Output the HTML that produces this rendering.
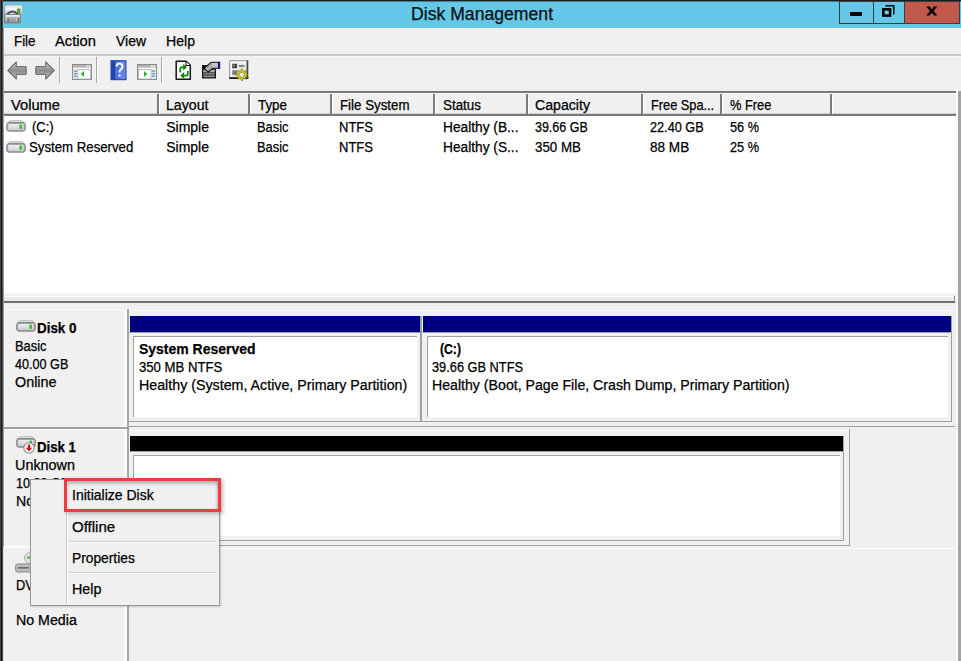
<!DOCTYPE html>
<html><head><meta charset="utf-8">
<style>
*{margin:0;padding:0;box-sizing:border-box}
html,body{width:961px;height:661px;overflow:hidden;background:#f0f0f0}
body{position:relative;font-family:"Liberation Sans",sans-serif;color:#000;font-size:14px}
.a{position:absolute}
.t{position:absolute;white-space:nowrap;line-height:1;transform-origin:0 0;-webkit-text-stroke:0.25px #000}
svg{position:absolute;overflow:visible}
</style></head><body>
<div class="a" style="left:0px;top:0px;width:961px;height:28px;background:#66c8e8"></div>
<div class="a" style="left:0px;top:0px;width:961px;height:1px;background:#1c1c1c"></div>
<div class="a" style="left:0px;top:1px;width:961px;height:1px;background:#3d7f93"></div>
<div class="a" style="left:0px;top:0px;width:1px;height:661px;background:#444;z-index:20"></div>
<div class="a" style="left:1px;top:0px;width:1px;height:661px;background:#131313;z-index:20"></div>
<div class="a" style="left:2px;top:0px;width:1px;height:661px;background:#4c4c4c;z-index:20"></div>
<div class="a" style="left:3px;top:28px;width:1px;height:518px;background:#9a9a9a;z-index:20"></div>
<div class="a" style="left:3px;top:546px;width:1px;height:115px;background:#d8d8d8;z-index:20"></div>
<div class="a" style="left:839px;top:1px;width:35px;height:23px;border:1px solid #3c3c3c;background:#66c8e8"></div>
<div class="a" style="left:873px;top:1px;width:32px;height:23px;border:1px solid #3c3c3c;background:#66c8e8"></div>
<div class="a" style="left:904px;top:1px;width:56px;height:23px;border:1px solid #3c3c3c;background:#c2584b"></div>
<div class="a" style="left:850px;top:12px;width:12px;height:4px;background:#000"></div>
<div class="a" style="left:3px;top:54px;width:958px;height:2px;background:#c9c9cc"></div>
<div class="a" style="left:3px;top:56px;width:958px;height:1px;background:#f6f6f8"></div>
<div class="a" style="left:59px;top:57px;width:1px;height:26px;background:#a8a8a8"></div>
<div class="a" style="left:60px;top:57px;width:1px;height:26px;background:#fcfcfc"></div>
<div class="a" style="left:96px;top:57px;width:1px;height:26px;background:#a8a8a8"></div>
<div class="a" style="left:97px;top:57px;width:1px;height:26px;background:#fcfcfc"></div>
<div class="a" style="left:161px;top:57px;width:1px;height:26px;background:#a8a8a8"></div>
<div class="a" style="left:162px;top:57px;width:1px;height:26px;background:#fcfcfc"></div>
<div class="a" style="left:3px;top:91px;width:953px;height:2px;background:#787878"></div>
<div class="a" style="left:3px;top:93px;width:953px;height:21px;background:#f0f0f0"></div>
<div class="a" style="left:3px;top:93px;width:953px;height:1px;background:#fcfcfc"></div>
<div class="a" style="left:3px;top:113px;width:953px;height:1px;background:#d2d2d2"></div>
<div class="a" style="left:3px;top:114px;width:953px;height:2px;background:#787878"></div>
<div class="a" style="left:3px;top:116px;width:953px;height:177px;background:#fff"></div>
<div class="a" style="left:956px;top:91px;width:2px;height:570px;background:#fafafa"></div>
<div class="a" style="left:958px;top:91px;width:3px;height:570px;background:#a3a3a3"></div>
<div class="a" style="left:157px;top:94px;width:2px;height:20px;background:#7c7c7c"></div>
<div class="a" style="left:159px;top:94px;width:1px;height:20px;background:#fff"></div>
<div class="a" style="left:248px;top:94px;width:2px;height:20px;background:#7c7c7c"></div>
<div class="a" style="left:250px;top:94px;width:1px;height:20px;background:#fff"></div>
<div class="a" style="left:330px;top:94px;width:2px;height:20px;background:#7c7c7c"></div>
<div class="a" style="left:332px;top:94px;width:1px;height:20px;background:#fff"></div>
<div class="a" style="left:433px;top:94px;width:2px;height:20px;background:#7c7c7c"></div>
<div class="a" style="left:435px;top:94px;width:1px;height:20px;background:#fff"></div>
<div class="a" style="left:526px;top:94px;width:2px;height:20px;background:#7c7c7c"></div>
<div class="a" style="left:528px;top:94px;width:1px;height:20px;background:#fff"></div>
<div class="a" style="left:641px;top:94px;width:2px;height:20px;background:#7c7c7c"></div>
<div class="a" style="left:643px;top:94px;width:1px;height:20px;background:#fff"></div>
<div class="a" style="left:720px;top:94px;width:2px;height:20px;background:#7c7c7c"></div>
<div class="a" style="left:722px;top:94px;width:1px;height:20px;background:#fff"></div>
<div class="a" style="left:830px;top:94px;width:2px;height:20px;background:#7c7c7c"></div>
<div class="a" style="left:832px;top:94px;width:1px;height:20px;background:#fff"></div>
<div class="a" style="left:3px;top:293px;width:952px;height:1px;background:#fafafa"></div>
<div class="a" style="left:3px;top:296px;width:951px;height:1px;background:#fcfcfc"></div>
<div class="a" style="left:3px;top:297px;width:951px;height:4px;background:#eaeaea"></div>
<div class="a" style="left:3px;top:301px;width:952px;height:2px;background:#6e6e6e"></div>
<div class="a" style="left:954px;top:296px;width:1px;height:6px;background:#8a8a8a"></div>
<div class="a" style="left:3px;top:309px;width:121px;height:352px;background:#f0f0f0"></div>
<div class="a" style="left:124px;top:309px;width:3px;height:352px;background:#fbfbfb"></div>
<div class="a" style="left:127px;top:309px;width:2px;height:352px;background:#a9a9a9"></div>
<div class="a" style="left:3px;top:427px;width:125px;height:2px;background:#a0a0a0"></div>
<div class="a" style="left:3px;top:309px;width:124px;height:1px;background:#fbfbfb"></div>
<div class="a" style="left:3px;top:429px;width:121px;height:1px;background:#fbfbfb"></div>
<div class="a" style="left:129px;top:310px;width:826px;height:1px;background:#f8f8f8"></div>
<div class="a" style="left:129px;top:430px;width:720px;height:1px;background:#f8f8f8"></div>
<div class="a" style="left:3px;top:546px;width:121px;height:2px;background:#fcfcfc"></div>
<div class="a" style="left:130px;top:316px;width:290px;height:16px;background:#000080"></div>
<div class="a" style="left:423px;top:316px;width:528px;height:16px;background:#000080"></div>
<div class="a" style="left:128px;top:332px;width:824px;height:1px;background:#a0a0a0"></div>
<div class="a" style="left:420px;top:316px;width:2px;height:106px;background:#a0a0a0"></div>
<div class="a" style="left:951px;top:316px;width:1px;height:106px;background:#a0a0a0"></div>
<div class="a" style="left:128px;top:421px;width:824px;height:1px;background:#a0a0a0"></div>
<div class="a" style="left:128px;top:426px;width:827px;height:1px;background:#a0a0a0"></div>
<div class="a" style="left:133px;top:336px;width:284px;height:81px;background:#fff;border-top:1px solid #a0a0a0;border-left:1px solid #a0a0a0"></div>
<div class="a" style="left:427px;top:336px;width:521px;height:81px;background:#fff;border-top:1px solid #a0a0a0;border-left:1px solid #a0a0a0"></div>
<div class="a" style="left:130px;top:436px;width:713px;height:15px;background:#000"></div>
<div class="a" style="left:843px;top:436px;width:1px;height:104px;background:#a0a0a0"></div>
<div class="a" style="left:130px;top:451px;width:714px;height:1px;background:#a0a0a0"></div>
<div class="a" style="left:133px;top:455px;width:707px;height:81px;background:#fff;border-top:1px solid #a0a0a0;border-left:1px solid #a0a0a0"></div>
<div class="a" style="left:128px;top:540px;width:716px;height:1px;background:#a0a0a0"></div>
<div class="a" style="left:849px;top:429px;width:1px;height:117px;background:#a0a0a0"></div>
<div class="a" style="left:128px;top:545px;width:722px;height:1px;background:#a0a0a0"></div>
<div class="a" style="left:128px;top:548px;width:827px;height:1px;background:#fbfbfb"></div>
<div class="a" style="left:30px;top:479px;width:190px;height:127px;background:#f0f0f0;border:1px solid #979797;box-shadow:1px 1px 2px rgba(0,0,0,.18);z-index:5"></div>
<div class="a" style="left:66px;top:482px;width:1px;height:121px;background:#cdcdcd;z-index:6"></div>
<div class="a" style="left:67px;top:482px;width:1px;height:121px;background:#fff;z-index:6"></div>
<div class="a" style="left:68px;top:541px;width:148px;height:1px;background:#cfcfcf;z-index:6"></div>
<div class="a" style="left:68px;top:542px;width:148px;height:1px;background:#fff;z-index:6"></div>
<div class="a" style="left:68px;top:572px;width:148px;height:1px;background:#cfcfcf;z-index:6"></div>
<div class="a" style="left:68px;top:573px;width:148px;height:1px;background:#fff;z-index:6"></div>
<div class="a" style="left:64px;top:478px;width:157px;height:34px;border:3px solid #f53a3f;box-shadow:2px 2px 4px rgba(0,0,0,.25), inset 0 3px 4px -1px rgba(0,0,0,.32), inset -2px 0 3px -1px rgba(0,0,0,.15);z-index:7"></div>
<svg style="left:4px;top:4px;" width="20" height="20" viewBox="0 0 20 20">
<defs><linearGradient id="ag" x1="0" y1="0" x2="0" y2="1"><stop offset="0" stop-color="#f0eef2"/><stop offset="0.5" stop-color="#e6e4ea"/><stop offset="1" stop-color="#c4c6cc"/></linearGradient>
<linearGradient id="ag2" x1="0" y1="0" x2="0" y2="1"><stop offset="0" stop-color="#c8ccd0"/><stop offset="1" stop-color="#7f868b"/></linearGradient></defs>
<rect x="0.6" y="1" width="18" height="9.8" rx="2.6" fill="url(#ag)" stroke="#a4a4aa" stroke-width="0.9"/>
<rect x="2" y="4" width="12" height="1.3" fill="#fafafa"/>
<path d="M3.2 10.2 Q8.5 4.8 13.6 10.2" fill="none" stroke="#4e5054" stroke-width="2"/>
<rect x="13.4" y="5" width="2.6" height="4.2" fill="#2fd22f" stroke="#3a6a3a" stroke-width="0.6"/>
<rect x="0.5" y="10.6" width="16" height="8.4" fill="url(#ag2)" stroke="#7a8186" stroke-width="0.9"/>
<rect x="1.2" y="11.2" width="14.6" height="1.4" fill="#eef3f6"/>
<path d="M3 13.8v3.4M13 13.8v3.4" stroke="#f2f2f2" stroke-width="1"/>
<path d="M4 14v3.4M14 14v3.4" stroke="#40454a" stroke-width="0.9"/>
</svg>
<svg style="left:882px;top:5px;" width="13" height="13" viewBox="0 0 13 13">
<path d="M3.5 0.75 H11.75 V9.5" fill="none" stroke="#000" stroke-width="1.5"/>
<rect x="1.3" y="4.3" width="6.8" height="6.3" fill="none" stroke="#000" stroke-width="2.5"/>
</svg>
<svg style="left:926px;top:6px;" width="12" height="10" viewBox="0 0 12 10">
<path d="M0.3 0.4 H3.7 L5.8 3.5 L7.9 0.4 H11.3 L7.6 4.95 L11.3 9.5 H7.9 L5.8 6.4 L3.7 9.5 H0.3 L4 4.95 Z" fill="#000"/>
</svg>
<svg style="left:7px;top:61px;" width="20" height="19" viewBox="0 0 20 19"><defs><linearGradient id="ar1" x1="0" y1="0" x2="0" y2="1"><stop offset="0" stop-color="#d2d2d2"/><stop offset="0.5" stop-color="#8c8c8c"/><stop offset="1" stop-color="#c4c4c4"/></linearGradient></defs>
<path d="M0.8 9.5 L9.3 1 L9.3 5.6 L18.5 5.6 Q19.2 5.6 19.2 6.4 L19.2 12.6 Q19.2 13.4 18.5 13.4 L9.3 13.4 L9.3 18 Z" fill="url(#ar1)" stroke="#747474" stroke-width="1.2" stroke-linejoin="round"/></svg>
<svg style="left:35px;top:61px;" width="20" height="19" viewBox="0 0 20 19"><defs><linearGradient id="ar2" x1="0" y1="0" x2="0" y2="1"><stop offset="0" stop-color="#d2d2d2"/><stop offset="0.5" stop-color="#8c8c8c"/><stop offset="1" stop-color="#c4c4c4"/></linearGradient></defs>
<path d="M19.2 9.5 L10.7 1 L10.7 5.6 L1.5 5.6 Q0.8 5.6 0.8 6.4 L0.8 12.6 Q0.8 13.4 1.5 13.4 L10.7 13.4 L10.7 18 Z" fill="url(#ar2)" stroke="#747474" stroke-width="1.2" stroke-linejoin="round"/></svg>
<svg style="left:72px;top:64px;" width="20" height="16" viewBox="0 0 20 16">
<rect x="0.5" y="0.5" width="19" height="15" fill="#e4e4e4" stroke="#8c8c8c"/>
<rect x="1" y="1" width="18" height="2.5" fill="#b4b4b4"/>
<rect x="14" y="1.5" width="1.5" height="1.5" fill="#fff"/><rect x="16.5" y="1.5" width="1.5" height="1.5" fill="#fff"/>
<rect x="1" y="4" width="18" height="1" fill="#fff"/>
<rect x="6" y="5.5" width="12.5" height="9.5" fill="#fff" stroke="#9a9a9a" stroke-width="0.6"/>
<rect x="2" y="6.5" width="3" height="1.3" fill="#5b9bd5"/><rect x="2" y="9" width="3" height="1.3" fill="#5b9bd5"/><rect x="2" y="11.5" width="3" height="1.3" fill="#5b9bd5"/>
<path d="M8.5 10 L12 7 L12 13 Z" fill="#2fb52f"/>
</svg>
<svg style="left:137px;top:64px;" width="20" height="16" viewBox="0 0 20 16">
<rect x="0.5" y="0.5" width="19" height="15" fill="#e4e4e4" stroke="#8c8c8c"/>
<rect x="1" y="1" width="18" height="2.5" fill="#b4b4b4"/>
<rect x="14" y="1.5" width="1.5" height="1.5" fill="#fff"/><rect x="16.5" y="1.5" width="1.5" height="1.5" fill="#fff"/>
<rect x="1" y="4" width="18" height="1" fill="#fff"/>
<rect x="1.5" y="5.5" width="12.5" height="9.5" fill="#fff" stroke="#9a9a9a" stroke-width="0.6"/>
<rect x="15" y="6.5" width="3" height="1.3" fill="#5b9bd5"/><rect x="15" y="9" width="3" height="1.3" fill="#5b9bd5"/><rect x="15" y="11.5" width="3" height="1.3" fill="#5b9bd5"/>
<path d="M10.5 10 L7 7 L7 13 Z" fill="#2fb52f"/>
</svg>
<svg style="left:110px;top:60px;" width="17" height="20" viewBox="0 0 17 20">
<defs><linearGradient id="hg" x1="0" y1="0" x2="1" y2="0"><stop offset="0" stop-color="#2a52c8"/><stop offset="0.25" stop-color="#1f3f9e"/><stop offset="0.3" stop-color="#4a6fd8"/><stop offset="1" stop-color="#6b8ceb"/></linearGradient></defs>
<rect x="1" y="0.7" width="15" height="19" fill="url(#hg)" stroke="#1d3ca8" stroke-width="1"/>
<path d="M6.6 6.6 Q6.6 3.6 9.4 3.6 Q12.4 3.6 12.4 6.4 Q12.4 8.4 10.6 9.6 Q9.5 10.4 9.5 12.6" fill="none" stroke="#f4f6ff" stroke-width="2"/>
<rect x="8.4" y="14.6" width="2.2" height="2" fill="#f4f6ff"/>
</svg>
<svg style="left:175px;top:60px;" width="17" height="21" viewBox="0 0 17 21">
<path d="M1.2 1.2 H11.2 L15.3 5.3 V19.2 H1.2 Z" fill="#fff" stroke="#151515" stroke-width="1.5" stroke-linejoin="round"/>
<path d="M11 1.5 V5.5 H15" fill="#fff" stroke="#151515" stroke-width="1.1"/>
<path d="M5.2 12.3 V9.2 Q5.2 7.2 7.2 7.2 H9" fill="none" stroke="#1a8c1a" stroke-width="1.9"/>
<path d="M8.2 3.8 L12 7.2 L8.2 10.6 Z" fill="#108210"/>
<path d="M12.8 11 V14 Q12.8 15.6 10.8 15.6 H8.5" fill="none" stroke="#1a8c1a" stroke-width="1.9"/>
<path d="M9.2 12 L5.3 15.5 L9.2 19 Z" fill="#108210"/>
</svg>
<svg style="left:201px;top:61px;" width="21" height="19" viewBox="0 0 21 19">
<rect x="1" y="4" width="14" height="13.5" fill="#111"/>
<rect x="2.3" y="8.6" width="11.5" height="2.8" fill="#b0b0b0"/>
<rect x="2.3" y="12.4" width="11.5" height="1" fill="#d0d0d0"/>
<rect x="2.3" y="14.3" width="11.5" height="2" fill="#8a8a8a"/>
<path d="M3 7.5 L9 2.2 Q10 1.2 11.5 1.2 L17.6 1.2 L17.6 7.2 L12 7.2 L7.3 11 Z" fill="#c4c4c4" stroke="#111" stroke-width="1.1" stroke-linejoin="round"/>
<path d="M5.5 7.2 L10.5 3.2 M7 8.8 L11.5 5" stroke="#777" stroke-width="0.9"/>
<rect x="17.8" y="0.6" width="1.4" height="7.4" fill="#1515c8"/>
</svg>
<svg style="left:229px;top:60px;" width="21" height="21" viewBox="0 0 21 21">
<rect x="0.8" y="0.8" width="18" height="17.6" fill="#e8e8e8" stroke="#8a8a8a" stroke-width="1.1"/>
<rect x="1.5" y="1.5" width="16.6" height="1.3" fill="#fff"/>
<rect x="1.5" y="1.5" width="1.3" height="16" fill="#fff"/>
<rect x="0.3" y="17.2" width="18.9" height="1.8" fill="#1a1a1a"/>
<rect x="17.6" y="0.5" width="1.5" height="18" fill="#444"/>
<rect x="3.3" y="3.8" width="4.6" height="4.4" fill="#3a3a3a"/>
<rect x="4.3" y="4.8" width="1.5" height="1.5" fill="#bbb"/>
<rect x="9.8" y="5.2" width="5.5" height="1.6" fill="#6a6a6a"/>
<rect x="3.3" y="10.4" width="4.6" height="4.4" fill="#777"/>
<path d="M12.80 8.60 L14.18 11.47 L17.18 10.42 L16.13 13.42 L19.00 14.80 L16.13 16.18 L17.18 19.18 L14.18 18.13 L12.80 21.00 L11.42 18.13 L8.42 19.18 L9.47 16.18 L6.60 14.80 L9.47 13.42 L8.42 10.42 L11.42 11.47 Z" fill="#f1ee1a" stroke="#6e6a00" stroke-width="0.7" stroke-linejoin="round"/>
<circle cx="12.8" cy="14.8" r="2.6" fill="#e8e8e8" stroke="#6e6a00" stroke-width="0.6"/>
</svg>
<svg style="left:6px;top:120px;" width="20" height="13" viewBox="0 0 20 13"><defs><linearGradient id="dg1" x1="0" y1="0" x2="0" y2="1"><stop offset="0" stop-color="#ececf0"/><stop offset="1" stop-color="#d2d2de"/></linearGradient></defs>
<path d="M2 2.8 Q2.5 0.6 5 0.6 L15 0.6 Q17.5 0.6 18 2.8 Z" fill="#dadada" stroke="#b8b8b8" stroke-width="0.8"/>
<rect x="0.7" y="2.6" width="18.6" height="8.6" rx="2.2" fill="#a9a9ad" stroke="#858589" stroke-width="1"/>
<rect x="2.2" y="4" width="15.4" height="5.8" rx="0.8" fill="url(#dg1)"/>
<rect x="13.3" y="4.5" width="2.8" height="4.5" rx="1" fill="#3fc42a"/>
</svg>
<svg style="left:6px;top:141px;" width="20" height="13" viewBox="0 0 20 13"><defs><linearGradient id="dg2" x1="0" y1="0" x2="0" y2="1"><stop offset="0" stop-color="#ececf0"/><stop offset="1" stop-color="#d2d2de"/></linearGradient></defs>
<path d="M2 2.8 Q2.5 0.6 5 0.6 L15 0.6 Q17.5 0.6 18 2.8 Z" fill="#dadada" stroke="#b8b8b8" stroke-width="0.8"/>
<rect x="0.7" y="2.6" width="18.6" height="8.6" rx="2.2" fill="#a9a9ad" stroke="#858589" stroke-width="1"/>
<rect x="2.2" y="4" width="15.4" height="5.8" rx="0.8" fill="url(#dg2)"/>
<rect x="13.3" y="4.5" width="2.8" height="4.5" rx="1" fill="#3fc42a"/>
</svg>
<svg style="left:16px;top:320px;" width="19" height="13" viewBox="0 0 19 13"><defs><linearGradient id="dg3" x1="0" y1="0" x2="0" y2="1"><stop offset="0" stop-color="#ececf0"/><stop offset="1" stop-color="#d2d2de"/></linearGradient></defs>
<path d="M2 2.8 Q2.5 0.6 5 0.6 L15 0.6 Q17.5 0.6 18 2.8 Z" fill="#dadada" stroke="#b8b8b8" stroke-width="0.8"/>
<rect x="0.7" y="2.6" width="18.6" height="8.6" rx="2.2" fill="#a9a9ad" stroke="#858589" stroke-width="1"/>
<rect x="2.2" y="4" width="15.4" height="5.8" rx="0.8" fill="url(#dg3)"/>
<rect x="13.3" y="4.5" width="2.8" height="4.5" rx="1" fill="#3fc42a"/>
</svg>
<svg style="left:16px;top:436px;" width="19" height="13" viewBox="0 0 19 13"><defs><linearGradient id="dg4" x1="0" y1="0" x2="0" y2="1"><stop offset="0" stop-color="#ececf0"/><stop offset="1" stop-color="#d2d2de"/></linearGradient></defs>
<path d="M2 2.8 Q2.5 0.6 5 0.6 L15 0.6 Q17.5 0.6 18 2.8 Z" fill="#dadada" stroke="#b8b8b8" stroke-width="0.8"/>
<rect x="0.7" y="2.6" width="18.6" height="8.6" rx="2.2" fill="#a9a9ad" stroke="#858589" stroke-width="1"/>
<rect x="2.2" y="4" width="15.4" height="5.8" rx="0.8" fill="url(#dg4)"/>
<rect x="13.3" y="4.5" width="2.8" height="4.5" rx="1" fill="#3fc42a"/>
</svg>
<svg style="left:23px;top:442px;" width="12" height="12" viewBox="0 0 12 12"><circle cx="6" cy="6" r="5.2" fill="#fff" stroke="#8a8a8a" stroke-width="1.1"/>
<path d="M4.8 2.5 H7.2 V5.8 H9.2 L6 9.5 L2.8 5.8 H4.8 Z" fill="#d81010"/></svg>
<svg style="left:15px;top:552px;" width="20" height="21" viewBox="0 0 20 21"><circle cx="15" cy="6" r="5.5" fill="#e0e0e6" stroke="#a0a0a8" stroke-width="0.8"/>
<circle cx="13.5" cy="5.5" r="1.6" fill="#3fd43a"/>
<rect x="0.7" y="12" width="19" height="8" rx="2" fill="#bdbdc2" stroke="#858589" stroke-width="1"/>
<rect x="3" y="15" width="11" height="1.6" fill="#6c6c70"/>
</svg>
<div class="t" style="left:411px;top:6.19px;font-size:17.5px;color:#141414;transform:scaleX(1.007);">Disk Management</div>
<div class="t" style="left:14px;top:33.73px;font-size:14.5px;color:#000;transform:scaleX(0.920);">File</div>
<div class="t" style="left:55px;top:33.73px;font-size:14.5px;color:#000;transform:scaleX(1.017);">Action</div>
<div class="t" style="left:116px;top:33.73px;font-size:14.5px;color:#000;transform:scaleX(0.962);">View</div>
<div class="t" style="left:166px;top:33.73px;font-size:14.5px;color:#000;transform:scaleX(0.972);">Help</div>
<div class="t" style="left:11px;top:98.15px;font-size:14px;color:#000;transform:scaleX(1.049);">Volume</div>
<div class="t" style="left:166px;top:98.15px;font-size:14px;color:#000;transform:scaleX(1.011);">Layout</div>
<div class="t" style="left:257.5px;top:98.15px;font-size:14px;color:#000;transform:scaleX(0.955);">Type</div>
<div class="t" style="left:339.5px;top:98.15px;font-size:14px;color:#000;transform:scaleX(0.950);">File System</div>
<div class="t" style="left:442.5px;top:98.15px;font-size:14px;color:#000;transform:scaleX(0.957);">Status</div>
<div class="t" style="left:535px;top:98.15px;font-size:14px;color:#000;transform:scaleX(1.010);">Capacity</div>
<div class="t" style="left:650.5px;top:98.15px;font-size:14px;color:#000;transform:scaleX(0.912);">Free Spa...</div>
<div class="t" style="left:730px;top:98.15px;font-size:14px;color:#000;transform:scaleX(0.917);">% Free</div>
<div class="t" style="left:32px;top:120.15px;font-size:14px;color:#000;transform:scaleX(0.930);">(C:)</div>
<div class="t" style="left:166.2px;top:120.15px;font-size:14px;color:#000;">Simple</div>
<div class="t" style="left:257.3px;top:120.15px;font-size:14px;color:#000;transform:scaleX(0.920);">Basic</div>
<div class="t" style="left:339px;top:120.15px;font-size:14px;color:#000;transform:scaleX(0.930);">NTFS</div>
<div class="t" style="left:443px;top:120.15px;font-size:14px;color:#000;transform:scaleX(0.980);">Healthy (B...</div>
<div class="t" style="left:535.3px;top:120.15px;font-size:14px;color:#000;transform:scaleX(0.891);">39.66 GB</div>
<div class="t" style="left:650px;top:120.15px;font-size:14px;color:#000;transform:scaleX(0.906);">22.40 GB</div>
<div class="t" style="left:730px;top:120.15px;font-size:14px;color:#000;transform:scaleX(0.908);">56 %</div>
<div class="t" style="left:28.7px;top:140.15px;font-size:14px;color:#000;transform:scaleX(0.944);">System Reserved</div>
<div class="t" style="left:166.2px;top:140.15px;font-size:14px;color:#000;">Simple</div>
<div class="t" style="left:257.3px;top:140.15px;font-size:14px;color:#000;transform:scaleX(0.920);">Basic</div>
<div class="t" style="left:339px;top:140.15px;font-size:14px;color:#000;transform:scaleX(0.930);">NTFS</div>
<div class="t" style="left:443px;top:140.15px;font-size:14px;color:#000;transform:scaleX(0.980);">Healthy (S...</div>
<div class="t" style="left:535.3px;top:140.15px;font-size:14px;color:#000;transform:scaleX(0.953);">350 MB</div>
<div class="t" style="left:650px;top:140.15px;font-size:14px;color:#000;transform:scaleX(0.969);">88 MB</div>
<div class="t" style="left:730px;top:140.15px;font-size:14px;color:#000;transform:scaleX(0.908);">25 %</div>
<div class="t" style="left:37px;top:320.30px;font-size:15px;font-weight:bold;color:#000;transform:scaleX(0.894);">Disk 0</div>
<div class="t" style="left:15px;top:339.45px;font-size:14px;color:#000;transform:scaleX(0.920);">Basic</div>
<div class="t" style="left:15px;top:357.15px;font-size:14px;color:#000;transform:scaleX(0.901);">40.00 GB</div>
<div class="t" style="left:15px;top:375.45px;font-size:14px;color:#000;transform:scaleX(1.025);">Online</div>
<div class="t" style="left:138.7px;top:341.00px;font-size:15px;font-weight:bold;color:#000;transform:scaleX(0.931);">System Reserved</div>
<div class="t" style="left:138.7px;top:359.95px;font-size:14px;color:#000;transform:scaleX(0.939);">350 MB NTFS</div>
<div class="t" style="left:138.7px;top:378.45px;font-size:14px;color:#000;transform:scaleX(1.017);">Healthy (System, Active, Primary Partition)</div>
<div class="t" style="left:439.6px;top:341.85px;font-size:14px;font-weight:bold;color:#000;transform:scaleX(0.871);">(C:)</div>
<div class="t" style="left:432px;top:359.95px;font-size:14px;color:#000;transform:scaleX(0.914);">39.66 GB NTFS</div>
<div class="t" style="left:432px;top:378.45px;font-size:14px;color:#000;transform:scaleX(1.010);">Healthy (Boot, Page File, Crash Dump, Primary Partition)</div>
<div class="t" style="left:37px;top:438.80px;font-size:15px;font-weight:bold;color:#000;transform:scaleX(0.882);">Disk 1</div>
<div class="t" style="left:15.3px;top:458.35px;font-size:14px;color:#000;transform:scaleX(1.028);">Unknown</div>
<div class="t" style="left:15.6px;top:476.35px;font-size:14px;color:#000;transform:scaleX(0.901);">10.00 GB</div>
<div class="t" style="left:15.6px;top:494.15px;font-size:14px;color:#000;transform:scaleX(1.011);">Not Initialized</div>
<div class="t" style="left:37px;top:556.30px;font-size:15px;font-weight:bold;color:#000;transform:scaleX(0.836);">CD-ROM 0</div>
<div class="t" style="left:15.5px;top:577.65px;font-size:14px;color:#000;transform:scaleX(0.916);">DVD (D:)</div>
<div class="t" style="left:15.5px;top:613.35px;font-size:14px;color:#000;transform:scaleX(1.015);">No Media</div>
<div class="t" style="left:72px;top:488.35px;font-size:14px;color:#000;z-index:8">Initialize Disk</div>
<div class="t" style="left:72px;top:519.75px;font-size:14px;color:#000;transform:scaleX(1.072);z-index:8">Offline</div>
<div class="t" style="left:72px;top:551.05px;font-size:14px;color:#000;transform:scaleX(0.984);z-index:8">Properties</div>
<div class="t" style="left:72px;top:582.25px;font-size:14px;color:#000;transform:scaleX(1.021);z-index:8">Help</div>
</body></html>
